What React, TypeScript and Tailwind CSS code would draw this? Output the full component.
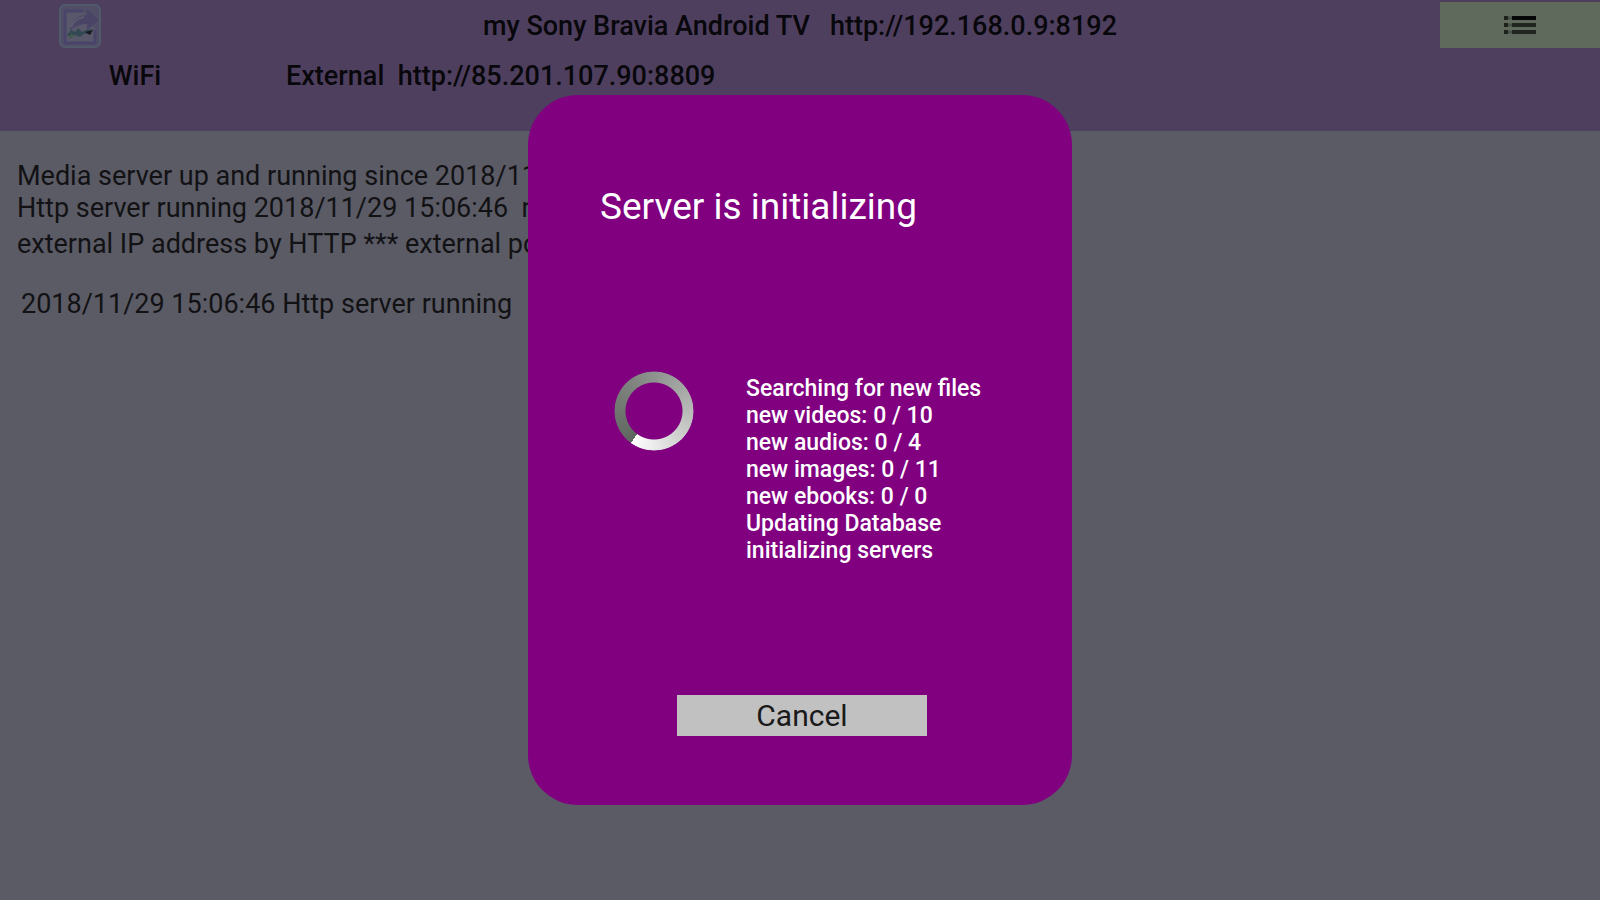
import React from "react";

const progress = [
    "Searching for new files",
    "new videos: 0 / 10",
    "new audios: 0 / 4",
    "new images: 0 / 11",
    "new ebooks: 0 / 0",
    "Updating Database",
    "initializing servers",
];

const Logo = () => (
    <svg viewBox="0 0 42 44" className="w-[42px] h-11" aria-hidden="true">
        <rect x="1" y="1" width="40" height="42" rx="5" fill="#514f68" stroke="#505a6a" strokeWidth="2" />
        <path d="M24 7H6v32h30V26" fill="#59576a" stroke="#48446a" strokeWidth="3" />
        <path d="M11 27c2-11 8-16 17-16V5l12 11-12 10v-6c-7 0-12 2-17 7z" fill="#4a4567" />
        <path d="M12 23c3-6 7-9 13-10" fill="none" stroke="#5c5a70" strokeWidth="2" />
        <path d="M8 31l4-5 4 2 3-4 4 4 4-2 7-1-3 4-6 1-4 3-5-2-4 3z" fill="#344a52" />
        <path d="M9 33l4-3 3 3z" fill="#45604c" />
        <path d="M26 28l8-2-3 5z" fill="#151a22" />
    </svg>
);

const ListIcon = () => (
    <svg viewBox="0 0 34 20" className="w-[34px] h-5" aria-hidden="true">
        <path d="M1 3h4M1 10h4M1 17h4" stroke="#1c211c" strokeWidth="4" />
        <path d="M5 3h4M5 10h4M5 17h4" stroke="#465046" strokeWidth="3" />
        <path d="M9 3h24" stroke="#050605" strokeWidth="4" />
        <path d="M9 10h24M9 17h24" stroke="#20261f" strokeWidth="4" />
    </svg>
);

const Header = () => (
    <header className="h-[131px] bg-[#4f3f5f] font-medium text-[27px]">
        <div className="grid grid-cols-[10%_1fr_10%] h-[52px]">
            <div className="flex justify-center items-center">
                <Logo />
            </div>
            <h1 className="flex justify-center items-center whitespace-pre">
                {"my Sony Bravia Android TV   http://192.168.0.9:8192"}
            </h1>
            <button aria-label="Menu" className="mt-[2px] mb-1 bg-[#5f695c] flex justify-center items-center">
                <ListIcon />
            </button>
        </div>
        <div className="flex items-center h-12">
            <span className="w-[270px] text-center">WiFi</span>
            <span className="pl-4 whitespace-pre">{"External  http://85.201.107.90:8809"}</span>
        </div>
    </header>
);

const Log = () => (
    <main className="px-[17px] pt-[29px] text-[27px] leading-8 text-[#121215] whitespace-pre">
        <p>Media server up and running since 2018/11/29 15:06:46</p>
        <p>{"Http server running 2018/11/29 15:06:46  no"}</p>
        <p className="pt-1">external IP address by HTTP *** external port</p>
        <p className="pt-7 pl-1">2018/11/29 15:06:46 Http server running</p>
    </main>
);

const Spinner = () => (
    <div
        role="status"
        aria-label="Loading"
        className="size-20 rounded-full bg-[conic-gradient(from_216deg,#5f665f,#808580_30%,#a5a8a5_55%,#d0d2d0_78%,#ffffff)] [mask-image:radial-gradient(circle,transparent_28px,black_29px,black_39px,transparent_40px)]"
    />
);

const InitDialog = () => (
    <div className="fixed inset-0 flex justify-center items-center">
        <div
            role="dialog"
            aria-labelledby="dialog-title"
            className="w-[34%] rounded-[50px] bg-[#800080] text-white flex flex-col pl-1 pt-[88px] pb-[69px]"
        >
            <h2 id="dialog-title" className="pl-[68px] text-[37px] leading-12">
                Server is initializing
            </h2>
            <div className="flex gap-[52px] pl-[82px] pt-[140px]">
                <Spinner />
                <ul className="pt-1 font-medium text-[23px] leading-[27px]">
                    {progress.map((line) => (
                        <li key={line}>{line}</li>
                    ))}
                </ul>
            </div>
            <button className="mt-[131px] mx-auto w-[250px] h-[41px] bg-[#c1c1c1] text-[#1a1a1a] text-[30px] leading-10">
                Cancel
            </button>
        </div>
    </div>
);

const App = () => {
    return (
        <div className="min-h-screen bg-[#5b5b65] text-[#08070b] font-[Roboto,sans-serif] overflow-hidden">
            <Header />
            <Log />
            <InitDialog />
        </div>
    );
};

export default App;
